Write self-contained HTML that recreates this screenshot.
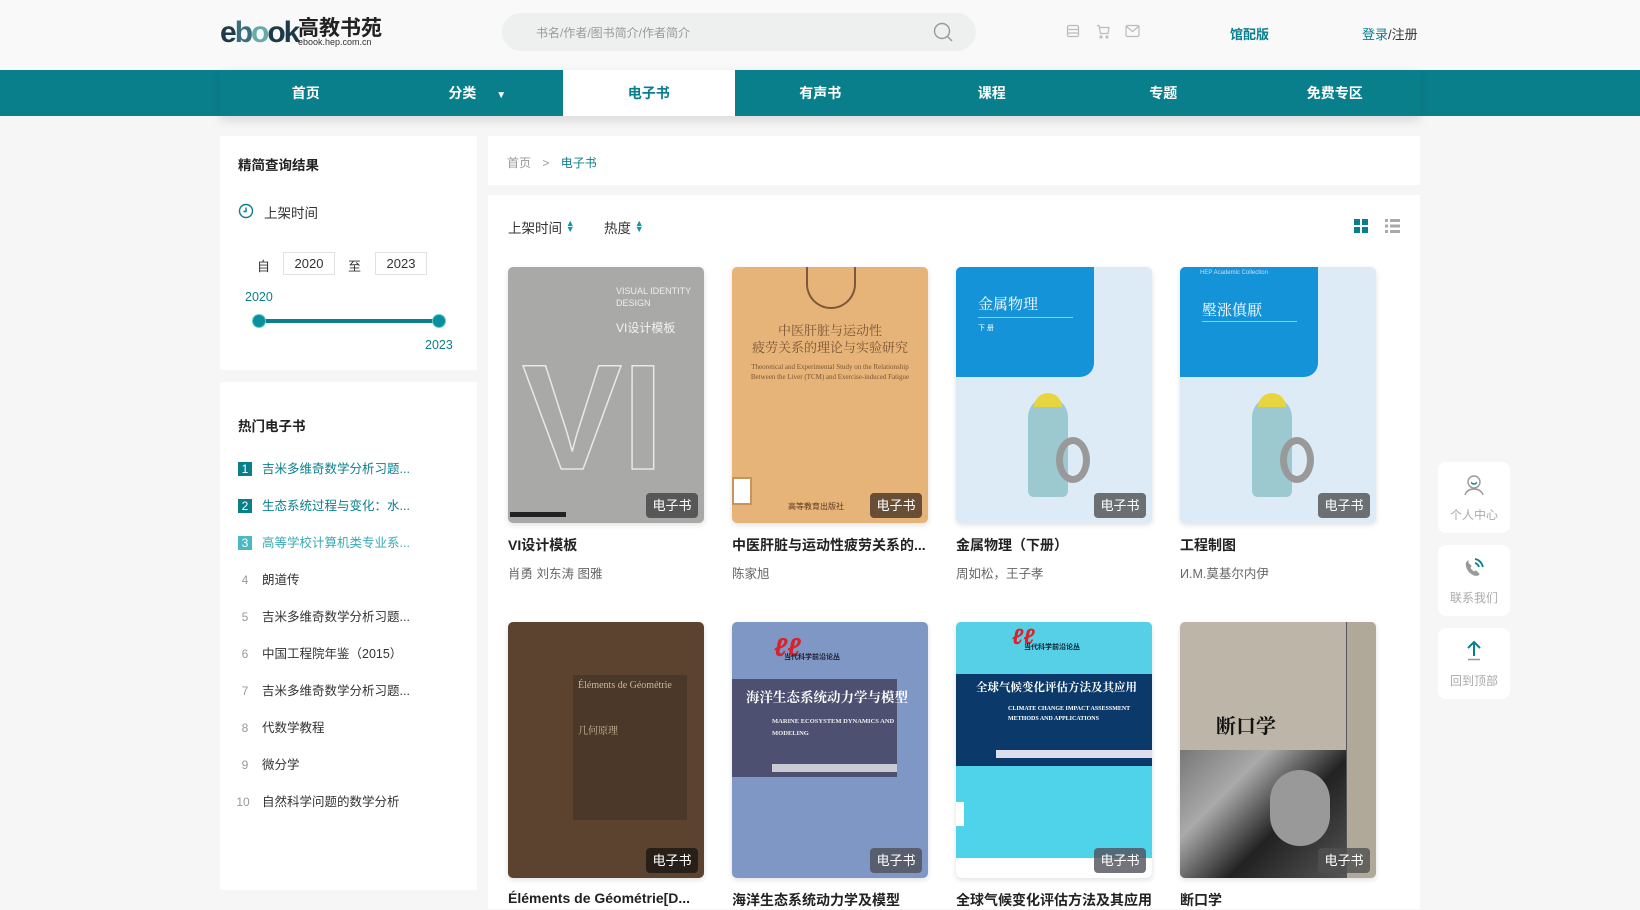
<!DOCTYPE html>
<html><head><meta charset="utf-8"><style>
*{margin:0;padding:0;box-sizing:border-box}
body{width:1640px;height:909px;overflow:hidden;background:#f6f6f6;font-family:"Liberation Sans","Noto Sans CJK SC",sans-serif;color:#333;position:relative}
.a{position:absolute}
.hdr{left:0;top:0;width:1640px;height:70px;background:#f9f9f9}
.nav{left:0;top:70px;width:1640px;height:46px;background:#0a7f8c}
.nav .it{position:absolute;top:0;height:46px;width:171.5px;line-height:46px;text-align:center;color:#fff;font-size:14px;font-weight:bold}
.card{background:#fff}
.cover{position:absolute;width:196px;height:256px;border-radius:5px;overflow:hidden;box-shadow:0 2px 6px rgba(0,0,0,.12)}
.tag{position:absolute;right:6px;bottom:5px;width:52px;height:25px;border-radius:4px;background:rgba(60,60,60,.75);color:#fff;font-size:13px;line-height:25px;text-align:center}
.bt{position:absolute;font-size:14px;font-weight:bold;color:#222;width:196px;white-space:nowrap;overflow:hidden}
.ba{position:absolute;font-size:12.5px;color:#666}
.li{position:absolute;left:238px;font-size:12.5px;color:#333;height:16px;line-height:16px}
.li b{display:inline-block;width:14px;height:14px;margin-right:10px;text-align:center;font-weight:normal;color:#999;font-size:12px;line-height:14px}
.li.t{color:#0a7f8c}
.li.t b{background:#0a7f8c;color:#fff}
.fb{position:absolute;left:1438px;width:72px;height:71px;background:#fff;border-radius:8px;text-align:center;font-size:12px;color:#aaa}
.fb span{position:absolute;left:0;right:0;top:44px}
.ar{display:inline-block;font-size:9px;line-height:6px;color:#0a9aa8;vertical-align:1px}
</style></head><body>
<div class="a hdr"></div>
<div class="a" style="left:220px;top:12px;width:180px;height:40px">
<span class="a" style="left:0;top:4px;font-size:30px;font-weight:bold;color:#1d3a4a;letter-spacing:-2px;font-family:'Liberation Sans',sans-serif">e<span style="color:#3a6e7a">b</span><span style="color:#6aa">o</span>o<span>k</span></span>
<span class="a" style="left:78px;top:0;font-size:21px;font-weight:bold;color:#222">高教书苑</span>
<span class="a" style="left:78px;top:25px;font-size:9px;color:#333">ebook.hep.com.cn</span>
</div>
<div class="a" style="left:502px;top:13px;width:474px;height:38px;border-radius:19px;background:#eef0f0"></div>
<div class="a" style="left:536px;top:24px;font-size:12px;color:#999">书名/作者/图书简介/作者简介</div>
<svg class="a" style="left:932px;top:21px" width="22" height="22" viewBox="0 0 22 22"><circle cx="10" cy="10" r="7.5" fill="none" stroke="#999" stroke-width="1.4"/><path d="M15.5 15.5L20 20" stroke="#999" stroke-width="1.4"/></svg>
<svg class="a" style="left:1066px;top:24px" width="14" height="14" viewBox="0 0 14 14" fill="none" stroke="#bbb" stroke-width="1.2"><rect x="1.5" y="1.5" width="11" height="11" rx="1.5"/><path d="M1.5 5.5h11M1.5 9h11"/></svg>
<svg class="a" style="left:1096px;top:24px" width="14" height="15" viewBox="0 0 14 15" fill="none" stroke="#bbb" stroke-width="1.2"><path d="M1 1.5h2l1.5 8h7.5l1-6H4"/><circle cx="5" cy="13" r="1"/><circle cx="11" cy="13" r="1"/></svg>
<svg class="a" style="left:1125px;top:24px" width="15" height="14" viewBox="0 0 15 14" fill="none" stroke="#bbb" stroke-width="1.2"><rect x="1" y="1.5" width="13" height="11" rx="1.5"/><path d="M1.5 2.5l6 5 6-5"/></svg>
<div class="a" style="left:1230px;top:24px;font-size:13px;color:#0a7f8c;font-weight:bold">馆配版</div>
<div class="a" style="left:1362px;top:24px;font-size:13px;color:#333"><span style="color:#0a7f8c">登录</span>/注册</div>

<div class="a nav">
<div class="a" style="left:220px;top:0;width:1200px;height:46px;box-shadow:0 4px 10px rgba(0,0,0,.12)"></div>
<div class="it" style="left:220px">首页</div>
<div class="it" style="left:391.5px">分类 <span style="font-size:10px;margin-left:16px">▼</span></div>
<div class="it" style="left:563px;background:#fff;color:#0a7f8c">电子书</div>
<div class="it" style="left:734.5px">有声书</div>
<div class="it" style="left:906px">课程</div>
<div class="it" style="left:1077.5px">专题</div>
<div class="it" style="left:1249px">免费专区</div>
</div>

<div class="a card" style="left:220px;top:136px;width:257px;height:234px"></div>
<div class="a" style="left:238px;top:154px;font-size:13.5px;font-weight:bold;color:#222">精简查询结果</div>
<svg class="a" style="left:238px;top:203px" width="16" height="16" viewBox="0 0 16 16" fill="none" stroke="#0a7f8c" stroke-width="1.4"><circle cx="8" cy="8" r="6.5"/><path d="M8 4.5V8.5H5.5"/></svg>
<div class="a" style="left:264px;top:202px;font-size:13.5px;color:#333">上架时间</div>
<div class="a" style="left:257px;top:256px;font-size:13px;color:#333">自</div>
<div class="a" style="left:283px;top:252px;width:52px;height:23px;border:1px solid #e2e2e2;font-size:13px;text-align:center;line-height:21px">2020</div>
<div class="a" style="left:348px;top:256px;font-size:13px;color:#333">至</div>
<div class="a" style="left:375px;top:252px;width:52px;height:23px;border:1px solid #e2e2e2;font-size:13px;text-align:center;line-height:21px">2023</div>
<div class="a" style="left:245px;top:290px;font-size:12.5px;color:#0a7f8c">2020</div>
<div class="a" style="left:258px;top:319px;width:181px;height:4px;background:#0a7f8c"></div>
<div class="a" style="left:253px;top:315px;width:12px;height:12px;border-radius:50%;background:#0a8f9c;box-shadow:0 0 0 1px #6cc"></div>
<div class="a" style="left:433px;top:315px;width:12px;height:12px;border-radius:50%;background:#0a8f9c;box-shadow:0 0 0 1px #6cc"></div>
<div class="a" style="left:425px;top:338px;font-size:12.5px;color:#0a7f8c">2023</div>

<div class="a card" style="left:220px;top:382px;width:257px;height:508px"></div>
<div class="a" style="left:238px;top:415px;font-size:13.5px;font-weight:bold;color:#222">热门电子书</div>
<div class="li t" style="top:461px"><b>1</b>吉米多维奇数学分析习题...</div>
<div class="li t" style="top:498px"><b>2</b>生态系统过程与变化：水...</div>
<div class="li t" style="top:535px;color:#3aa9b5"><b style="background:#4cb8c4">3</b>高等学校计算机类专业系...</div>
<div class="li" style="top:572px"><b>4</b>朗道传</div>
<div class="li" style="top:609px"><b>5</b>吉米多维奇数学分析习题...</div>
<div class="li" style="top:646px"><b>6</b>中国工程院年鉴（2015）</div>
<div class="li" style="top:683px"><b>7</b>吉米多维奇数学分析习题...</div>
<div class="li" style="top:720px"><b>8</b>代数学教程</div>
<div class="li" style="top:757px"><b>9</b>微分学</div>
<div class="li" style="top:794px"><b style="width:18px;margin-left:-4px;margin-right:10px">10</b>自然科学问题的数学分析</div>

<div class="a card" style="left:488px;top:136px;width:932px;height:49px"></div>
<div class="a" style="left:507px;top:154px;font-size:12px;color:#999">首页 <span style="margin:0 8px">&gt;</span> <span style="color:#0a7f8c">电子书</span></div>
<div class="a card" style="left:488px;top:195px;width:932px;height:714px"></div>
<div class="a" style="left:508px;top:217px;font-size:13.5px;color:#333">上架时间 <span class="ar">▲<br>▼</span></div>
<div class="a" style="left:604px;top:217px;font-size:13.5px;color:#333">热度 <span class="ar">▲<br>▼</span></div>
<svg class="a" style="left:1354px;top:219px" width="14" height="14"><rect x="0" y="0" width="6" height="6" fill="#0a7f8c"/><rect x="8" y="0" width="6" height="6" fill="#0a7f8c"/><rect x="0" y="8" width="6" height="6" fill="#0a7f8c"/><rect x="8" y="8" width="6" height="6" fill="#0a7f8c"/></svg>
<svg class="a" style="left:1385px;top:219px" width="15" height="14" fill="#aaa"><rect x="0" y="0" width="3" height="3"/><rect x="5" y="0" width="10" height="3"/><rect x="0" y="5.5" width="3" height="3"/><rect x="5" y="5.5" width="10" height="3"/><rect x="0" y="11" width="3" height="3"/><rect x="5" y="11" width="10" height="3"/></svg>

<div class="cover" style="left:508px;top:267px;background:#a9a9a7">
<div class="a" style="left:108px;top:18px;font-size:9px;color:#eee;line-height:12px">VISUAL IDENTITY<br>DESIGN</div>
<div class="a" style="left:108px;top:52px;font-size:12px;color:#f2f2f2">VI设计模板</div>
<div class="a" style="left:14px;top:70px;font-size:150px;font-weight:bold;color:transparent;-webkit-text-stroke:1.5px #e8e8e8;line-height:160px">VI</div>
<div class="a" style="left:2px;bottom:6px;width:56px;height:5px;background:#222"></div>
<div class="tag">电子书</div></div>
<div class="cover" style="left:732px;top:267px;background:#e6b478">
<div class="a" style="left:74px;top:0;width:50px;height:42px;border:2px solid #7a5a3a;border-top:none;border-radius:0 0 25px 25px"></div>
<div class="a" style="left:0;width:196px;top:54px;text-align:center;font-family:'Noto Serif CJK SC',serif;font-size:13px;color:#7a5535;line-height:17px">中医肝脏与运动性<br>疲劳关系的理论与实验研究</div>
<div class="a" style="left:0;width:196px;top:95px;text-align:center;font-family:'Liberation Serif',serif;font-size:7px;color:#7a5535;line-height:10px">Theoretical and Experimental Study on the Relationship<br>Between the Liver (TCM) and Exercise-induced Fatigue</div>
<div class="a" style="left:0;top:210px;width:20px;height:28px;background:#fff;border:2px solid #c8945a"></div>
<div class="a" style="left:56px;top:234px;font-size:8px;color:#5a3a22">高等教育出版社</div>
<div class="tag" style="background:rgba(80,60,40,.85)">电子书</div></div>
<div class="cover" style="left:956px;top:267px;background:#dcebf6">
<div class="a" style="left:0;top:0;width:138px;height:110px;background:#1593d8;border-radius:0 0 14px 0"></div>
<div class="a" style="left:22px;top:26px;font-family:'Noto Serif CJK SC',serif;font-size:15px;color:#fff">金属物理</div>
<div class="a" style="left:22px;top:50px;width:95px;height:1px;background:#9cd"></div>
<div class="a" style="left:22px;top:56px;font-size:7px;color:#fff">下 册</div>
<div class="a" style="left:72px;top:130px;width:40px;height:100px;background:#9cc8d0;border-radius:20px 20px 6px 6px"></div>
<div class="a" style="left:78px;top:126px;width:28px;height:14px;background:#e8d43c;border-radius:14px 14px 0 0"></div>
<div class="a" style="left:100px;top:170px;width:34px;height:46px;border:7px solid #999;border-radius:50%"></div>
<div class="tag" style="background:rgba(80,80,80,.8)">电子书</div></div>
<div class="cover" style="left:1180px;top:267px;background:#dcebf6">
<div class="a" style="left:0;top:0;width:138px;height:110px;background:#1593d8;border-radius:0 0 14px 0"></div>
<div class="a" style="left:20px;top:3px;font-size:6px;color:#cde">HEP Academic Collection</div>
<div class="a" style="left:22px;top:32px;font-family:'Noto Serif CJK SC',serif;font-size:15px;color:#fff">壂涨傎厭</div>
<div class="a" style="left:22px;top:54px;width:95px;height:1px;background:#9cd"></div>
<div class="a" style="left:72px;top:130px;width:40px;height:100px;background:#9cc8d0;border-radius:20px 20px 6px 6px"></div>
<div class="a" style="left:78px;top:126px;width:28px;height:14px;background:#e8d43c;border-radius:14px 14px 0 0"></div>
<div class="a" style="left:100px;top:170px;width:34px;height:46px;border:7px solid #999;border-radius:50%"></div>
<div class="tag" style="background:rgba(80,80,80,.8)">电子书</div></div>
<div class="bt" style="left:508px;top:535px">VI设计模板</div><div class="ba" style="left:508px;top:563px">肖勇 刘东涛 图雅</div>
<div class="bt" style="left:732px;top:535px">中医肝脏与运动性疲劳关系的...</div><div class="ba" style="left:732px;top:563px">陈家旭</div>
<div class="bt" style="left:956px;top:535px">金属物理（下册）</div><div class="ba" style="left:956px;top:563px">周如松，王子孝</div>
<div class="bt" style="left:1180px;top:535px">工程制图</div><div class="ba" style="left:1180px;top:563px">И.М.莫基尔内伊</div>

<div class="cover" style="left:508px;top:622px;background:#5c4330">
<div class="a" style="left:65px;top:53px;width:114px;height:145px;background:#4c3828"></div>
<div class="a" style="left:70px;top:58px;font-family:'Liberation Serif',serif;font-size:10px;color:#c8b89a">Éléments de Géométrie</div>
<div class="a" style="left:70px;top:100px;font-family:'Noto Serif CJK SC',serif;font-size:10px;color:#c8b89a">几何原理</div>
<div class="tag" style="background:rgba(30,25,20,.85)">电子书</div></div>
<div class="cover" style="left:732px;top:622px;background:#7f97c4">
<div class="a" style="left:0;top:57px;width:165px;height:98px;background:#4d5070"></div>
<div class="a" style="left:42px;top:10px;font-size:26px;color:#d8232a;font-style:italic;font-weight:bold">ℓℓ</div>
<div class="a" style="left:52px;top:30px;font-size:7px;color:#223;font-weight:bold">当代科学前沿论丛</div>
<div class="a" style="left:14px;top:64px;font-family:'Noto Serif CJK SC',serif;font-size:13.5px;color:#fff;font-weight:bold;white-space:nowrap">海洋生态系统动力学与模型</div>
<div class="a" style="left:40px;top:94px;font-family:'Liberation Serif',serif;font-size:6.5px;color:#eee;font-weight:bold;line-height:12px">MARINE ECOSYSTEM DYNAMICS AND<br>MODELING</div>
<div class="a" style="left:40px;top:142px;width:125px;height:8px;background:#c8cad4"></div>
<div class="tag" style="background:rgba(80,80,90,.8)">电子书</div></div>
<div class="cover" style="left:956px;top:622px;background:#4fd3ea">
<div class="a" style="left:0;top:0;width:196px;height:52px;background:#55d0e6"></div>
<div class="a" style="left:0;top:52px;width:196px;height:92px;background:#0b3a6a"></div>
<div class="a" style="left:56px;top:2px;font-size:22px;color:#d8232a;font-style:italic;font-weight:bold">ℓℓ</div>
<div class="a" style="left:68px;top:20px;font-size:7px;color:#123;font-weight:bold">当代科学前沿论丛</div>
<div class="a" style="left:20px;top:57px;font-family:'Noto Serif CJK SC',serif;font-size:11.5px;color:#fff;font-weight:bold;white-space:nowrap">全球气候变化评估方法及其应用</div>
<div class="a" style="left:52px;top:82px;font-family:'Liberation Serif',serif;font-size:6px;color:#fff;font-weight:bold;line-height:10px">CLIMATE CHANGE IMPACT ASSESSMENT<br>METHODS AND APPLICATIONS</div>
<div class="a" style="left:40px;top:128px;width:156px;height:8px;background:#dde"></div>
<div class="a" style="left:0;top:236px;width:196px;height:20px;background:#fff"></div>
<div class="a" style="left:0;top:180px;width:8px;height:24px;background:#fff"></div>
<div class="tag" style="background:rgba(80,80,90,.8)">电子书</div></div>
<div class="cover" style="left:1180px;top:622px;background:#bcb5a8">
<div class="a" style="left:166px;top:0;width:30px;height:256px;background:#b0a898;border-left:1px solid #555"></div>
<div class="a" style="left:0;top:128px;width:166px;height:128px;background:linear-gradient(135deg,#777 0%,#aaa 30%,#222 60%,#555 100%)"></div>
<div class="a" style="left:90px;top:148px;width:60px;height:76px;border-radius:30px;background:#999"></div>
<div class="a" style="left:36px;top:88px;font-family:'Noto Serif CJK SC',serif;font-size:20px;color:#111;font-weight:bold">断口学</div>
<div class="tag" style="background:rgba(80,80,80,.8)">电子书</div></div>
<div class="bt" style="left:508px;top:890px">Éléments de Géométrie[D...</div>
<div class="bt" style="left:732px;top:890px">海洋生态系统动力学及模型</div>
<div class="bt" style="left:956px;top:890px">全球气候变化评估方法及其应用</div>
<div class="bt" style="left:1180px;top:890px">断口学</div>

<div class="fb" style="top:462px"><svg class="a" style="left:25px;top:12px" width="22" height="22" viewBox="0 0 22 22" fill="none" stroke="#999" stroke-width="1.4"><circle cx="11" cy="8" r="6"/><path d="M8 8.5q3 3 6 0" stroke="#0a7f8c"/><path d="M2 21q2-6 9-6t9 6"/></svg><span>个人中心</span></div>
<div class="fb" style="top:545px"><svg class="a" style="left:25px;top:12px" width="22" height="22" viewBox="0 0 22 22" fill="none" stroke-width="1.8"><path d="M5 4q-3 2-1 7t7 7q4 1 5-1l-3-3-2 1q-3-2-4-4l1-2-3-3z" fill="#999" stroke="#999" stroke-width="1"/><path d="M12 6q3 1 4 4M12 2q6 1 8 8" stroke="#0a7f8c"/></svg><span>联系我们</span></div>
<div class="fb" style="top:628px"><svg class="a" style="left:26px;top:11px" width="20" height="22" viewBox="0 0 20 22" fill="none" stroke="#0a7f8c" stroke-width="2"><path d="M10 17V3M4 9l6-6 6 6"/><path d="M4 20.5h12" stroke="#999" stroke-width="1.5"/></svg><span>回到顶部</span></div>
</body></html>
